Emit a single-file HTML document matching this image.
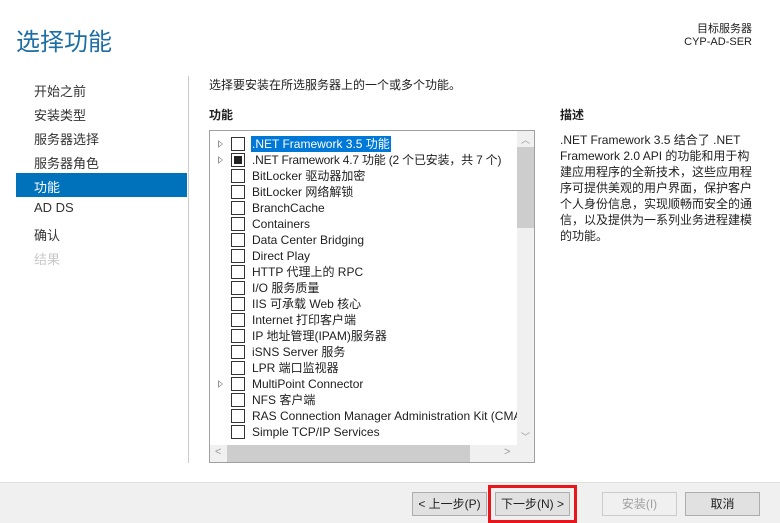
<!DOCTYPE html>
<html><head><meta charset="utf-8"><style>
*{margin:0;padding:0;box-sizing:border-box}
body{width:780px;height:523px;background:#fff;font-family:"Liberation Sans","Noto Sans CJK SC",sans-serif;font-size:12px;color:#1e1e1e;position:relative;overflow:hidden}
.a{position:absolute;white-space:nowrap}
.nav{left:34px;font-size:13px;color:#333}
.row{position:absolute;left:0;height:16px;line-height:16px;width:310px}
.cb{position:absolute;left:21px;top:1px;width:14px;height:14px;border:1px solid #333;background:#fff}
.tx{position:absolute;left:42px;top:0;font-size:12px;white-space:nowrap}
.ar{position:absolute;left:8px;top:4px;width:0;height:0;border-left:5px solid #999;border-top:4px solid transparent;border-bottom:4px solid transparent}
.ar:after{content:"";position:absolute;left:-4px;top:-2px;border-left:3px solid #fff;border-top:2px solid transparent;border-bottom:2px solid transparent}
.btn{position:absolute;top:492px;width:75px;height:24px;border:1px solid #adadad;background:#e1e1e1;text-align:center;line-height:22px;font-size:12px}
</style></head><body>
<div class="a" style="left:16px;top:22px;font-size:24px;color:#1c6ea4">选择功能</div>
<div class="a" style="right:28px;top:23px;font-size:11px;text-align:right;line-height:13px">目标服务器<br>CYP-AD-SER</div>
<div class="a" style="left:188px;top:76px;width:1px;height:387px;background:#ccc"></div>
<div class="a nav" style="top:81px">开始之前</div>
<div class="a nav" style="top:105px">安装类型</div>
<div class="a nav" style="top:129px">服务器选择</div>
<div class="a nav" style="top:153px">服务器角色</div>
<div class="a" style="left:16px;top:173px;width:171px;height:24px;background:#0072bc"></div>
<div class="a nav" style="top:177px;color:#fff">功能</div>
<div class="a nav" style="top:200px">AD DS</div>
<div class="a nav" style="top:225px">确认</div>
<div class="a nav" style="top:249px;color:#c8c8c8">结果</div>
<div class="a" style="left:209px;top:76px">选择要安装在所选服务器上的一个或多个功能。</div>
<div class="a" style="left:209px;top:106px;font-weight:bold">功能</div>
<div class="a" style="left:560px;top:106px;font-weight:bold">描述</div>
<div class="a" style="left:560px;top:132px;line-height:16px">.NET Framework 3.5 结合了 .NET<br>Framework 2.0 API 的功能和用于构<br>建应用程序的全新技术，这些应用程<br>序可提供美观的用户界面，保护客户<br>个人身份信息，实现顺畅而安全的通<br>信，以及提供为一系列业务进程建模<br>的功能。</div>
<div class="a" style="left:209px;top:130px;width:326px;height:333px;border:1px solid #a0a0a0;overflow:hidden">
 <div style="position:absolute;left:0;top:5px;width:307px;height:310px;overflow:hidden">
  <div class="row" style="top:0"><span class="ar"></span><span class="cb"></span><span class="tx" style="background:#0078d7;color:#fff;padding:0 1px;left:41px">.NET Framework 3.5 功能</span></div>
  <div class="row" style="top:16px"><span class="ar"></span><span class="cb"><span style="position:absolute;left:2px;top:2px;width:8px;height:8px;background:#222"></span></span><span class="tx" style="letter-spacing:-0.2px">.NET Framework 4.7 功能 (2 个已安装，共 7 个)</span></div>
  <div class="row" style="top:32px"><span class="cb"></span><span class="tx">BitLocker 驱动器加密</span></div>
  <div class="row" style="top:48px"><span class="cb"></span><span class="tx">BitLocker 网络解锁</span></div>
  <div class="row" style="top:64px"><span class="cb"></span><span class="tx">BranchCache</span></div>
  <div class="row" style="top:80px"><span class="cb"></span><span class="tx">Containers</span></div>
  <div class="row" style="top:96px"><span class="cb"></span><span class="tx">Data Center Bridging</span></div>
  <div class="row" style="top:112px"><span class="cb"></span><span class="tx">Direct Play</span></div>
  <div class="row" style="top:128px"><span class="cb"></span><span class="tx">HTTP 代理上的 RPC</span></div>
  <div class="row" style="top:144px"><span class="cb"></span><span class="tx">I/O 服务质量</span></div>
  <div class="row" style="top:160px"><span class="cb"></span><span class="tx">IIS 可承载 Web 核心</span></div>
  <div class="row" style="top:176px"><span class="cb"></span><span class="tx">Internet 打印客户端</span></div>
  <div class="row" style="top:192px"><span class="cb"></span><span class="tx">IP 地址管理(IPAM)服务器</span></div>
  <div class="row" style="top:208px"><span class="cb"></span><span class="tx">iSNS Server 服务</span></div>
  <div class="row" style="top:224px"><span class="cb"></span><span class="tx">LPR 端口监视器</span></div>
  <div class="row" style="top:240px"><span class="ar"></span><span class="cb"></span><span class="tx">MultiPoint Connector</span></div>
  <div class="row" style="top:256px"><span class="cb"></span><span class="tx">NFS 客户端</span></div>
  <div class="row" style="top:272px"><span class="cb"></span><span class="tx">RAS Connection Manager Administration Kit (CMAK)</span></div>
  <div class="row" style="top:288px"><span class="cb"></span><span class="tx">Simple TCP/IP Services</span></div>
 </div>
 <div style="position:absolute;left:307px;top:0;width:17px;height:314px;background:#f0f0f0">
  <div style="position:absolute;top:16px;left:0;width:17px;height:81px;background:#cdcdcd"></div>
  <div style="position:absolute;top:2px;left:4px;font-size:9px;color:#999">︿</div>
  <div style="position:absolute;bottom:2px;left:4px;font-size:9px;color:#999">﹀</div>
 </div>
 <div style="position:absolute;left:0;top:314px;width:324px;height:17px;background:#f0f0f0">
  <div style="position:absolute;left:17px;top:0;width:243px;height:17px;background:#cdcdcd"></div>
  <div style="position:absolute;left:5px;top:1px;color:#999;font-size:11px">&lt;</div>
  <div style="position:absolute;left:294px;top:1px;color:#999;font-size:11px">&gt;</div>
 </div>
</div>
<div class="a" style="left:0;top:482px;width:780px;height:41px;background:#f0f0f0;border-top:1px solid #dfdfdf"></div>
<div class="btn" style="left:412px">&lt; 上一步(P)</div>
<div class="a" style="left:488px;top:485px;width:89px;height:38px;border:3px solid #e8151b"></div>
<div class="btn" style="left:495px">下一步(N) &gt;</div>
<div class="btn" style="left:602px;border-color:#ccc;background:#f0f0f0;color:#a0a0a0">安装(I)</div>
<div class="btn" style="left:685px">取消</div>
</body></html>
